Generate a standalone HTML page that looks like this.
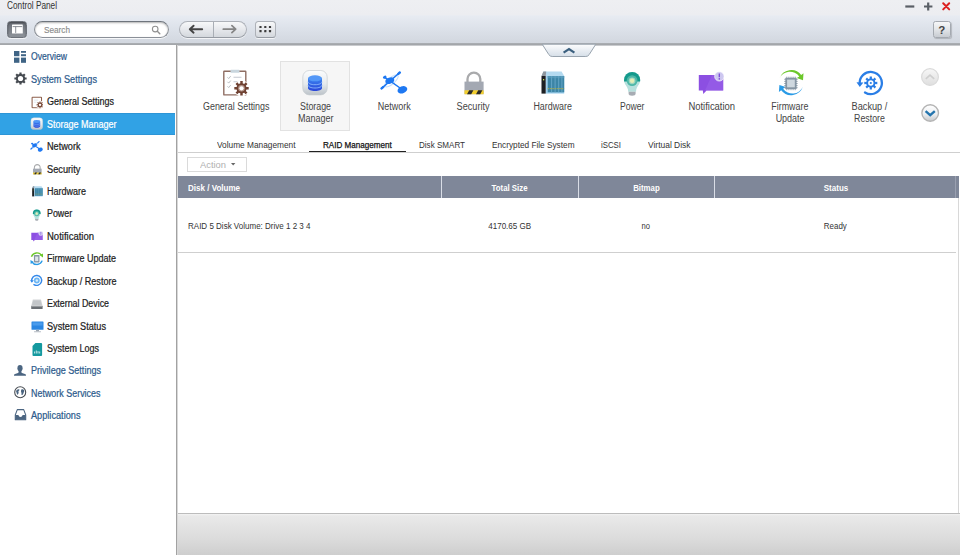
<!DOCTYPE html>
<html><head><meta charset="utf-8"><title>Control Panel</title>
<style>
*{box-sizing:border-box;margin:0;padding:0}
html,body{width:960px;height:555px;overflow:hidden;background:#fff;font-family:"Liberation Sans",sans-serif;color:#333}
.a{position:absolute}
.t{position:absolute;white-space:nowrap;line-height:14px;height:14px;display:block}
#top{left:0;top:0;width:960px;height:43px;background:linear-gradient(#eeeff2 0,#ecedf1 14.500px,#e7ebf2 16px,#dde2ea 28px,#d2d7df 43px)}
#topline{left:0;top:42.500px;width:960px;height:3px;background:linear-gradient(#b4b8bd 0,#9da0a4 35%,#a9acb0 65%,#e6e7e9 100%)}
#side{left:0;top:45px;width:176px;height:510px;background:#fff}
#vline{left:176px;top:45px;width:2px;height:510px;background:linear-gradient(90deg,#a2a2a2 0,#a2a2a2 50%,#d8d8d8 50%,#d8d8d8 100%)}
#sel{left:0;top:113px;width:175.3px;height:21.900px;background:#31a2e5;border-top:1px solid #2d95d6;border-bottom:1px solid #2d95d6}
#foot{left:178px;top:513px;width:782px;height:42px;background:linear-gradient(#f3f3f3 0,#e9e9e9 2px,#dcdcdc 24px,#cdcdcd 42px);border-top:1px solid #bcbcbc}
.btn{border:1px solid #adb1b8;border-bottom-color:#959aa2;background:linear-gradient(#f7f8f9,#e6e8ec 50%,#d4d8dd);box-shadow:0 1px 0 rgba(255,255,255,.7)}
#selbox{left:280px;top:61.3px;width:70.4px;height:70px;background:#f6f6f6;border:1px solid #e2e2e2}
#tabline{left:178px;top:151.5px;width:782px;height:1.3px;background:#cfcfcf}
#tabsel{left:309.2px;top:150.700px;width:96.900px;height:1.800px;background:#222}
#action{left:187px;top:157.3px;width:59.5px;height:14.5px;border:1px solid #dadada;background:#fff}
#th{left:178px;top:176.100px;width:781px;height:21.600px;background:#7f8799}
.vd{top:176.2px;width:1px;height:21.600px;background:#d9dde6}
#rowline{left:178px;top:252px;width:777.5px;height:1px;background:#cfcfcf}
#rline{left:958px;top:198px;width:1px;height:315px;background:#d8d8d8}

</style></head><body>
<div class="a" id="top"></div>
<div class="a" id="topline"></div>
<div class="a" id="side"></div>
<div class="a" id="sel"></div>
<div class="a" id="vline"></div>
<div class="a" id="foot"></div>
<div class="a" id="selbox"></div>
<div class="a" id="tabline"></div>
<div class="a" id="tabsel"></div>
<div class="a" id="action"></div>
<svg class="a" id="actarrow" style="left:230.500px;top:163px" width="5" height="3" viewBox="0 0 5 3"><path d="M0 0h4.400l-2.200 2.600z" fill="#666"/></svg>
<div class="a" id="th"></div>
<div class="a vd" style="left:441px"></div>
<div class="a vd" style="left:578px"></div>
<div class="a vd" style="left:714px"></div>
<div class="a vd" style="left:955px;background:#9aa0b0"></div>
<div class="a" id="rowline"></div>
<div class="a" id="rline"></div>
<!--TOOLBAR--><div class="a" style="left:6.5px;top:21px;width:20.5px;height:16.5px;border-radius:3.5px;border:1px solid #6d727a;background:linear-gradient(#686d75,#8f949b);box-shadow:inset 0 1px 2px rgba(0,0,0,.35),0 1px 0 rgba(255,255,255,.7)"></div>
<svg class="a" style="left:6.5px;top:21px" width="21" height="17" viewBox="0 0 21 17"><rect x="5" y="3.500" width="10.800" height="9" rx=".500" fill="#fff"/><path d="M5.600 5.600h9.600M8.700 5.600v6.300" stroke="#6f747c" stroke-width=".800" fill="none"/></svg>
<div class="a" style="left:33.500px;top:20.500px;width:135.200px;height:17.2px;border-radius:9px;border:1px solid #8b9098;border-top-color:#6f757d;background:#fff;box-shadow:inset 0 1px 2px rgba(0,0,0,.3),0 1px 0 rgba(255,255,255,.8)"></div>
<svg class="a" style="left:149px;top:23px" width="13" height="13" viewBox="0 0 13 13"><circle cx="6.200" cy="6.100" r="2.800" fill="none" stroke="#909090" stroke-width="1.100"/><path d="M8.300 8.300l2.500 2.500" stroke="#909090" stroke-width="1.400" stroke-linecap="round"/></svg>
<div class="a btn" style="left:179px;top:21px;width:67.5px;height:16.6px;border-radius:8.5px"></div>
<div class="a" style="left:213px;top:22px;width:1px;height:15px;background:#a9aeb5"></div>
<svg class="a" style="left:179px;top:21px" width="68" height="17" viewBox="0 0 68 17"><path d="M11 8.200h12.200M14.600 4.700l-3.800 3.500 3.800 3.500" fill="none" stroke="#444" stroke-width="1.900" stroke-linecap="round" stroke-linejoin="round"/><path d="M44.300 8.200h12.200M52.900 4.700l3.800 3.500-3.800 3.500" fill="none" stroke="#858585" stroke-width="1.700" stroke-linecap="round" stroke-linejoin="round"/></svg>
<div class="a btn" style="left:255px;top:21px;width:20.6px;height:16.6px;border-radius:3.5px"></div>
<svg class="a" style="left:255px;top:21px" width="21" height="17" viewBox="0 0 21 17"><g fill="#3c3c3c"><rect x="4.4" y="4.9" width="2.200" height="2.200" rx=".400"/><rect x="9.2" y="4.9" width="2.200" height="2.200" rx=".400"/><rect x="13.9" y="4.9" width="2.200" height="2.200" rx=".400"/><rect x="4.4" y="9.1" width="2.200" height="2.200" rx=".400"/><rect x="9.2" y="9.1" width="2.200" height="2.200" rx=".400"/><rect x="13.9" y="9.1" width="2.200" height="2.200" rx=".400"/></g></svg>
<div class="a btn" style="left:933.4px;top:21.3px;width:17.3px;height:16.3px;border-radius:2.5px;border-color:#a4a9b0;background:linear-gradient(#f6f7f8,#e2e5e8 50%,#c8ccd2);box-shadow:1px 1px 1px rgba(0,0,0,.18)"></div>
<span class="t" style="left:938.2px;top:22.6px;font-size:11.5px;font-weight:bold;color:#444">?</span>
<svg class="a" style="left:900px;top:0" width="56" height="13" viewBox="0 0 56 13"><path d="M5.300 6.500h9" stroke="#5a5f66" stroke-width="2.200"/><path d="M24 6.500h8.400M28.200 2.500v8" stroke="#5a5f66" stroke-width="2.200"/><path d="M43.200 3.200l6 6.200M49.200 3.200l-6 6.200" stroke="#dc2020" stroke-width="2" stroke-linecap="round"/></svg>
<svg class="a" style="left:540px;top:43px" width="58" height="16" viewBox="0 0 58 16"><defs><linearGradient id="hg" x1="0" y1="0" x2="0" y2="1"><stop offset="0" stop-color="#fdfdfe"/><stop offset="1" stop-color="#d6dfe8"/></linearGradient></defs><path d="M2.2 1.2h53.6l-6.6 10.4q-1.2 1.9-3.4 1.9h-33.6q-2.2 0-3.4-1.9z" fill="url(#hg)" stroke="#98a3ae" stroke-width="1"/><path d="M23.6 9.6l5.4-3.6 5.4 3.6" fill="none" stroke="#3b607f" stroke-width="2.2" stroke-linejoin="miter"/></svg>
<!--/TOOLBAR-->
<!--ICONS--><svg width="0" height="0" style="position:absolute"><defs><symbol id="i-gen" viewBox="0 0 28 28"><rect x="1.800" y="2.300" width="22" height="23.600" rx=".500" fill="#fff" stroke="#8f6e63" stroke-width="1.400"/>
<rect x="8.500" y=".800" width="9" height="3" rx=".600" fill="#c9d6de"/>
<path d="M5.500 8.300l1.200 1.300 2-2.500M5.500 12.800l1.200 1.300 2-2.500M5.500 17.300l1.200 1.300 2-2.500" fill="none" stroke="#b4b8bc" stroke-width=".900"/>
<path d="M11.500 8.300h8M11.500 12.800h6" stroke="#c4c8d0" stroke-width="1.100"/>
<circle cx="19.500" cy="19.300" r="8" fill="#fff"/>
<path d="M24.46 18.11L26.69 18.04L26.69 20.56L24.46 20.49L23.85 21.96L25.47 23.50L23.70 25.27L22.16 23.65L20.69 24.26L20.76 26.49L18.24 26.49L18.31 24.26L16.84 23.65L15.30 25.27L13.53 23.50L15.15 21.96L14.54 20.49L12.31 20.56L12.31 18.04L14.54 18.11L15.15 16.64L13.53 15.10L15.30 13.33L16.84 14.95L18.31 14.34L18.24 12.11L20.76 12.11L20.69 14.34L22.16 14.95L23.70 13.33L25.47 15.10L23.85 16.64Z" fill="#6f4132"/><circle cx="19.500" cy="19.300" r="3.300" fill="#b4968b"/><circle cx="19.500" cy="19.300" r="2.100" fill="#fff"/></symbol><symbol id="i-sto" viewBox="0 0 28 28"><defs><linearGradient id="sg" x1="0" y1="0" x2="0" y2="1"><stop offset="0" stop-color="#fbfcfd"/><stop offset=".55" stop-color="#e6eaed"/><stop offset="1" stop-color="#bcc3c9"/></linearGradient><linearGradient id="cg" x1="0" y1="0" x2="0" y2="1"><stop offset="0" stop-color="#3a82f0"/><stop offset="1" stop-color="#2a46d8"/></linearGradient></defs>
<rect x="1.800" y="1.500" width="24.400" height="24.400" rx="6.500" fill="url(#sg)" stroke="#c6cbd0" stroke-width=".700"/>
<path d="M7 9.300v9.600c0 1.800 3.100 3.100 7 3.100s7-1.300 7-3.100V9.300z" fill="url(#cg)"/>
<path d="M7 12.700c0 1.800 3.100 3 7 3s7-1.200 7-3M7 16c0 1.800 3.100 3 7 3s7-1.200 7-3" fill="none" stroke="#8db8fb" stroke-width=".900"/>
<ellipse cx="14" cy="9.300" rx="7" ry="3" fill="#5297f7"/></symbol><symbol id="i-net" viewBox="0 0 28 28"><ellipse cx="11.500" cy="11.800" rx="8.500" ry="3.200" fill="none" stroke="#bcd8fb" stroke-width="1.100" transform="rotate(-41 11.500 11.800)" opacity=".8"/>
<path d="M1.600 19.400L19.800 3.500" stroke="#1e78f2" stroke-width="1.500" stroke-linecap="round"/>
<path d="M1.600 19.400l1.500-1.300M18.300 4.800l1.500-1.300" stroke="#1e78f2" stroke-width="2.400" stroke-linecap="round"/>
<path d="M4.600 8.300l5 3.400 12.600 8.800" stroke="#1e78f2" stroke-width="1.500" stroke-linecap="round"/>
<ellipse cx="4.700" cy="8.200" rx="1.900" ry="1.400" fill="#1e78f2" transform="rotate(-25 4.700 8.200)"/>
<ellipse cx="9.800" cy="11.600" rx="4.600" ry="3" fill="#1e78f2" transform="rotate(-22 9.800 11.600)"/>
<ellipse cx="22.400" cy="20.800" rx="5" ry="3.500" fill="#1e78f2" transform="rotate(-22 22.400 20.800)"/></symbol><symbol id="i-sec" viewBox="0 0 28 28"><path d="M7.500 13.500V10a6.400 6.400 0 0 1 12.800 0v3.500" fill="none" stroke="#a9aaac" stroke-width="2.300"/>
<rect x="4.500" y="12.600" width="19.100" height="12.600" fill="#a3a8b2"/>
<rect x="4.500" y="21.300" width="19.100" height="3.900" fill="#f3cf2e"/>
<path d="M7 25.200l2.200-3.900h4.200l-2.200 3.900zM16 25.200l2.200-3.900h4.200l-2.200 3.900z" fill="#2b2b2b"/></symbol><symbol id="i-hw" viewBox="0 0 28 28"><path d="M4.400 2.500h18.200l2.600 4.500H2.500z" fill="#b4daf0"/><path d="M4.400 2.500h2.800l-.500 4.500H2.500z" fill="#8e959c"/>
<rect x="6.700" y="7" width="18.500" height="17.600" fill="#a2d2ee"/>
<rect x="2.500" y="7" width="4.200" height="17.600" fill="#1d2024"/>
<rect x="8.700" y="7" width="16.500" height="16.300" fill="#3c85a6"/>
<path d="M12.600 7v16.300M16.100 7v16.300M19.700 7v16.300M22.900 7v16.300" stroke="#69a9c9" stroke-width=".900"/>
<rect x="8.700" y="7" width="16.500" height="2.200" fill="#5fa0c0" opacity=".6"/>
<path d="M8.700 19.700h16.500" stroke="#b9b042" stroke-width=".900" stroke-dasharray="1.600 .700"/>
<rect x="4" y="10" width="1.200" height="1.400" fill="#c4e04a"/></symbol><symbol id="i-pow" viewBox="0 0 28 28"><path d="M6 11a8.100 8.100 0 1 1 16.200 0c0 3.500-2 5.200-3.200 7.500-.700 1.300-1 2.800-1 4.300h-7.800c0-1.500-.300-3-1-4.300-1.200-2.300-3.200-4-3.200-7.500z" fill="#b7e0dd"/>
<path d="M6 11a8.100 8.100 0 1 1 16.200 0l-.100 1.500h-16z" fill="#149a8c"/>
<circle cx="14.100" cy="11.600" r="5.400" fill="#4db8a8"/>
<circle cx="14.100" cy="11.800" r="3.400" fill="#9fd6c0"/>
<circle cx="14.100" cy="11.800" r="2.200" fill="#e4efb8"/>
<path d="M10.600 22.800h7v2c0 1.100-1.300 2-3.500 2s-3.500-.900-3.500-2z" fill="#a7acb3"/></symbol><symbol id="i-not" viewBox="0 0 28 28"><path d="M2.800 6h24.400v15.400H10.500l-3.200 3.600-.5-3.600H2.800z" fill="#8c4fe2"/>
<path d="M16 6h11.200v15.400H9z" fill="#9a63ea" opacity=".6"/>
<circle cx="23.300" cy="7.400" r="4.700" fill="#cdc7f0" stroke="#fff" stroke-width=".600"/>
<path d="M23.300 4.400v3.800" stroke="#7a49d6" stroke-width="1.300"/><circle cx="23.300" cy="9.900" r=".800" fill="#7a49d6"/></symbol><symbol id="i-fw" viewBox="0 0 28 28"><path d="M2.500 9.400A12.500 12.500 0 0 1 24.200 6L26.500 4.300 26 11.200 19.800 9.100 22.300 7.500A11.500 11.500 0 0 0 2.500 9.400Z" fill="#6cc72b"/>
<path d="M25.900 17.800A12.500 12.500 0 0 1 4.200 21.200L1.900 22.900 2.400 16 8.600 18.100 6.100 19.700A11.500 11.500 0 0 0 25.900 17.800Z" fill="#2a9be6"/>
<rect x="8.300" y="8.800" width="11.300" height="11.300" fill="#8796a4"/>
<path d="M9.800 7.700v13.500M11.900 7.700v13.500M14 7.700v13.500M16.100 7.700v13.500M18.200 7.700v13.500M7.300 10.300h13.300M7.300 12.400h13.300M7.300 14.500h13.300M7.300 16.600h13.300M7.300 18.700h13.300" stroke="#8796a4" stroke-width=".900"/>
<rect x="10.100" y="10.600" width="7.700" height="7.700" fill="#cfd8df"/></symbol><symbol id="i-bak" viewBox="0 0 28 28"><path d="M3.700 14.800A11.100 11.100 0 1 1 9 23.500" fill="none" stroke="#2a7ee6" stroke-width="2.300" stroke-linecap="round"/>
<path d="M.500 13.200l3.300 4.700 3.600-4.500z" fill="#2a7ee6"/>
<path d="M19.37 12.90L21.30 12.87L21.30 15.13L19.37 15.10L18.81 16.46L20.20 17.80L18.60 19.40L17.26 18.01L15.90 18.57L15.93 20.50L13.67 20.50L13.70 18.57L12.34 18.01L11.00 19.40L9.40 17.80L10.79 16.46L10.23 15.10L8.30 15.13L8.30 12.87L10.23 12.90L10.79 11.54L9.40 10.20L11.00 8.60L12.34 9.99L13.70 9.43L13.67 7.50L15.93 7.50L15.90 9.43L17.26 9.99L18.60 8.60L20.20 10.20L18.81 11.54Z" fill="#2a7ee6"/><circle cx="14.800" cy="14" r="2.700" fill="#fff"/><circle cx="14.800" cy="14" r="1.100" fill="#2a7ee6"/></symbol><symbol id="i-gens" viewBox="0 0 28 28"><rect x="2.400" y="2.600" width="20.600" height="23" rx="1.200" fill="#fff" stroke="#8d5f4c" stroke-width="2.300"/>
<path d="M6.500 9h9M6.500 13.500h6" stroke="#d5e0e8" stroke-width="1.600"/>
<circle cx="19.700" cy="19.300" r="8.600" fill="#fff"/>
<path d="M24.76 18.09L27.19 17.99L27.19 20.61L24.76 20.51L24.13 22.02L25.92 23.67L24.07 25.52L22.42 23.73L20.91 24.36L21.01 26.79L18.39 26.79L18.49 24.36L16.98 23.73L15.33 25.52L13.48 23.67L15.27 22.02L14.64 20.51L12.21 20.61L12.21 17.99L14.64 18.09L15.27 16.58L13.48 14.93L15.33 13.08L16.98 14.87L18.49 14.24L18.39 11.81L21.01 11.81L20.91 14.24L22.42 14.87L24.07 13.08L25.92 14.93L24.13 16.58Z" fill="#7b4b3a"/><circle cx="19.700" cy="19.300" r="2.600" fill="#fff"/></symbol><symbol id="i-nets" viewBox="0 0 28 28"><path d="M2 19.500L19.500 3.500" stroke="#1e78f2" stroke-width="2.600" stroke-linecap="round"/>
<path d="M4.600 7.800l5 3.800 12.600 8.800" stroke="#1e78f2" stroke-width="2.400" stroke-linecap="round"/>
<ellipse cx="11.500" cy="11.800" rx="8.500" ry="3.600" fill="#bcd8fb" transform="rotate(-41 11.500 11.800)" opacity=".55"/>
<ellipse cx="4.700" cy="7.800" rx="2.400" ry="1.900" fill="#1e78f2"/>
<ellipse cx="9.800" cy="11.600" rx="5.400" ry="4" fill="#1e78f2" transform="rotate(-22 9.800 11.600)"/>
<ellipse cx="22.200" cy="20.800" rx="5.400" ry="4.200" fill="#1e78f2" transform="rotate(-22 22.200 20.800)"/></symbol><symbol id="i-fws" viewBox="0 0 28 28"><path d="M3 10A12 12 0 0 1 24.500 7.500" fill="none" stroke="#6cc72b" stroke-width="3"/>
<path d="M20.500 7l7 4.500-.500-8.500z" fill="#6cc72b"/>
<path d="M25.400 18A12 12 0 0 1 3.900 20.500" fill="none" stroke="#2a9be6" stroke-width="3"/>
<path d="M7.900 21l-7-4.500.500 8.500z" fill="#2a9be6"/>
<rect x="8.200" y="6.500" width="11.600" height="15.500" rx="1" fill="#8796a4"/>
<rect x="10.700" y="9.500" width="6.600" height="9.500" fill="#dfe6ea"/></symbol><symbol id="i-baks" viewBox="0 0 28 28"><path d="M3.800 15.500A10.700 10.700 0 1 1 8.500 22.800" fill="none" stroke="#3388ea" stroke-width="3" stroke-linecap="round"/>
<path d="M0 13.500l4 5.500 4.300-5.300z" fill="#3388ea"/>
<circle cx="14.700" cy="14" r="6.300" fill="#6db6f4"/><circle cx="14.700" cy="14" r="2.600" fill="#d5ecfc"/></symbol></defs></svg>
<svg class="a" style="left:222.0px;top:69.300px" width="28" height="28"><use href="#i-gen"/></svg>
<svg class="a" style="left:301.0px;top:69.300px" width="28" height="28"><use href="#i-sto"/></svg>
<svg class="a" style="left:380.4px;top:69.300px" width="28" height="28"><use href="#i-net"/></svg>
<svg class="a" style="left:459.6px;top:69.300px" width="28" height="28"><use href="#i-sec"/></svg>
<svg class="a" style="left:539.3px;top:69.300px" width="28" height="28"><use href="#i-hw"/></svg>
<svg class="a" style="left:618.0px;top:69.300px" width="28" height="28"><use href="#i-pow"/></svg>
<svg class="a" style="left:696.3px;top:69.300px" width="28" height="28"><use href="#i-not"/></svg>
<svg class="a" style="left:776.7px;top:69.300px" width="28" height="28"><use href="#i-fw"/></svg>
<svg class="a" style="left:856.3px;top:69.300px" width="28" height="28"><use href="#i-bak"/></svg>
<svg class="a" style="left:919px;top:66px" width="22" height="22" viewBox="0 0 22 22"><defs><linearGradient id="ug" x1="0" y1="0" x2="0" y2="1"><stop offset="0" stop-color="#f7f7f7"/><stop offset="1" stop-color="#dedede"/></linearGradient></defs><circle cx="11" cy="11" r="8.400" fill="url(#ug)" stroke="#dadada" stroke-width="1.200"/><path d="M6.800 12.800l4.200-3.600 4.200 3.600" fill="none" stroke="#cfcfcf" stroke-width="1.700"/></svg>
<svg class="a" style="left:919px;top:102px" width="22" height="22" viewBox="0 0 22 22"><defs><linearGradient id="dg" x1="0" y1="0" x2="0" y2="1"><stop offset="0" stop-color="#ffffff"/><stop offset=".55" stop-color="#eef0f2"/><stop offset="1" stop-color="#c6c8cb"/></linearGradient></defs><circle cx="11.200" cy="11" r="8.300" fill="url(#dg)" stroke="#b4b4b4" stroke-width="1.400"/><path d="M6.600 9.200l4.600 4 4.600-4" fill="none" stroke="#2474ad" stroke-width="2.400"/></svg><!--/ICONS-->
<!--SIDEICONS--><svg width="0" height="0" style="position:absolute"><defs><symbol id="s-ov" viewBox="0 0 13 13" overflow="visible"><g fill="#3f6485"><rect x="0" y="0" width="5.400" height="5.200"/><rect x="7" y="0" width="5" height="1.800"/><rect x="7" y="3.200" width="5" height="2"/><rect x="0" y="6.600" width="5.400" height="5.200"/><rect x="7" y="6.600" width="5" height="5.200"/></g></symbol><symbol id="s-gear" viewBox="0 0 13 13" overflow="visible"><path d="M11.07 5.40L12.61 5.43L12.61 7.57L11.07 7.60L10.51 8.96L11.57 10.07L10.07 11.57L8.96 10.51L7.60 11.07L7.57 12.61L5.43 12.61L5.40 11.07L4.04 10.51L2.93 11.57L1.43 10.07L2.49 8.96L1.93 7.60L0.39 7.57L0.39 5.43L1.93 5.40L2.49 4.04L1.43 2.93L2.93 1.43L4.04 2.49L5.40 1.93L5.43 0.39L7.57 0.39L7.60 1.93L8.96 2.49L10.07 1.43L11.57 2.93L10.51 4.04Z" fill="#454a50"/><circle cx="6.500" cy="6.500" r="2.600" fill="#fff"/></symbol><symbol id="s-ext" viewBox="0 0 13 13" overflow="visible"><path d="M1.800.600h8.200l1.600 6.500H.200z" fill="#d2d4d6"/><path d="M2.300 1.400h7.200l1.200 4.700H1.100z" fill="#c3c6c9"/><rect x=".200" y="6.900" width="11.400" height="3" rx=".500" fill="#6b6f74"/><rect x=".200" y="6.900" width="11.400" height="1" fill="#9a9da1"/></symbol><symbol id="s-stat" viewBox="0 0 13 13" overflow="visible"><rect x=".500" y=".500" width="12" height="8.300" rx=".600" fill="#2b86e2"/><rect x="1.500" y="1.500" width="10" height="3" fill="#4a9bec"/><rect x="5" y="8.800" width="3" height="1.500" fill="#9aa3ad"/><rect x="3" y="10.200" width="7" height="1.100" rx=".400" fill="#b5bcc4"/></symbol><symbol id="s-log" viewBox="0 0 13 13" overflow="visible"><path d="M3.400 0h5.800q.900 0 .900.900v11.200q0 .900-.900.900H1.400q-.900 0-.900-.900V2.900z" fill="#15999f"/><path d="M2.600 10.500v-2M4.300 10.500v-3M6 10.500v-2.400M7.700 10.500v-2" stroke="#d6f1f0" stroke-width=".900"/></symbol><symbol id="s-priv" viewBox="0 0 13 13" overflow="visible"><g fill="#4b6581"><ellipse cx="6" cy="3.200" rx="2.600" ry="3.100"/><path d="M4.600 5.500h2.800v1.600c0 .600.400.900 1.300 1.200l2.300.800c.900.300 1 .900 1 1.700H0c0-.800.100-1.400 1-1.700l2.300-.800c.900-.300 1.300-.600 1.300-1.200z"/></g></symbol><symbol id="s-glob" viewBox="0 0 13 13" overflow="visible"><circle cx="6.200" cy="6.200" r="5.500" fill="#fff" stroke="#474c52" stroke-width="1.100"/><path d="M2.300 4.500c1-.800 2.200-1.400 3-1 .600.500-.300 1.200-.800 1.800-.500.700.400 1 .100 1.800-.300.800-.600 1.700-1.200 1.500-.700-.300-.500-1.400-.900-2.100-.300-.600-.600-1.300-.200-2zM7.600 3.300c.900-.300 2.100.200 2.600 1 .300.800-.200 1.500-.500 2.300-.300.800-.500 2-1.400 2.400-.800.300-1-.700-.800-1.500.200-.700-.500-1.100-.500-1.900 0-.900.100-1.900.600-2.300z" fill="#4b6581"/></symbol><symbol id="s-app" viewBox="0 0 13 13" overflow="visible"><path d="M2.300.600h6.400l2 5.300v4.900H.300V5.900z" fill="#fff" stroke="#4b6581" stroke-width="1.100" stroke-linejoin="round"/><path d="M.300 6h3.100c.300 1.300 1.100 1.900 2.100 1.900s1.800-.600 2.100-1.900h3.100v4.800H.300z" fill="#4b6581"/></symbol></defs></svg>
<svg class="a" style="left:13.80px;top:50.50px;overflow:visible" width="13" height="13"><use href="#s-ov"/></svg>
<svg class="a" style="left:13.50px;top:72.40px;overflow:visible" width="13" height="13"><use href="#s-gear"/></svg>
<svg class="a" style="left:30.60px;top:95.98px" width="12.8" height="12.8"><use href="#i-gens"/></svg>
<svg class="a" style="left:30.00px;top:117.32px" width="13.6" height="13.6"><use href="#i-sto"/></svg>
<svg class="a" style="left:30.20px;top:139.56px" width="13" height="13"><use href="#i-nets"/></svg>
<svg class="a" style="left:30.70px;top:163.10px" width="12.6" height="12.6"><use href="#i-sec"/></svg>
<svg class="a" style="left:30.70px;top:185.14px" width="13" height="13"><use href="#i-hw"/></svg>
<svg class="a" style="left:30.30px;top:207.78px" width="13.4" height="13.4"><use href="#i-pow"/></svg>
<svg class="a" style="left:30.20px;top:230.02px" width="13" height="13"><use href="#i-not"/></svg>
<svg class="a" style="left:30.00px;top:252.16px" width="13.4" height="13.4"><use href="#i-fws"/></svg>
<svg class="a" style="left:30.30px;top:274.30px" width="13" height="13"><use href="#i-baks"/></svg>
<svg class="a" style="left:31.30px;top:298.60px;overflow:visible" width="13" height="13"><use href="#s-ext"/></svg>
<svg class="a" style="left:30.60px;top:320.60px;overflow:visible" width="13" height="13"><use href="#s-stat"/></svg>
<svg class="a" style="left:31.90px;top:342.60px;overflow:visible" width="13" height="13"><use href="#s-log"/></svg>
<svg class="a" style="left:14.00px;top:364.80px;overflow:visible" width="13" height="13"><use href="#s-priv"/></svg>
<svg class="a" style="left:13.80px;top:385.50px;overflow:visible" width="13" height="13"><use href="#s-glob"/></svg>
<svg class="a" style="left:14.60px;top:409.00px;overflow:visible" width="13" height="13"><use href="#s-app"/></svg><!--/SIDEICONS-->

<span class="t" style="left:31.00px;top:50.30px;font-size:10px;color:#2d5b8c;-webkit-text-stroke:0.22px currentColor;transform:scaleX(0.8636);transform-origin:0 50%">Overview</span>
<span class="t" style="left:31.00px;top:72.74px;font-size:10px;color:#2d5b8c;-webkit-text-stroke:0.22px currentColor;transform:scaleX(0.9133);transform-origin:0 50%">System Settings</span>
<span class="t" style="left:47.00px;top:95.18px;font-size:10px;color:#222;-webkit-text-stroke:0.22px currentColor;transform:scaleX(0.8993);transform-origin:0 50%">General Settings</span>
<span class="t" style="left:47.00px;top:117.62px;font-size:10px;color:#fff;-webkit-text-stroke:0.22px currentColor;transform:scaleX(0.8980);transform-origin:0 50%">Storage Manager</span>
<span class="t" style="left:47.00px;top:140.06px;font-size:10px;color:#222;-webkit-text-stroke:0.22px currentColor;transform:scaleX(0.9158);transform-origin:0 50%">Network</span>
<span class="t" style="left:47.00px;top:162.50px;font-size:10px;color:#222;-webkit-text-stroke:0.22px currentColor;transform:scaleX(0.9218);transform-origin:0 50%">Security</span>
<span class="t" style="left:47.00px;top:184.94px;font-size:10px;color:#222;-webkit-text-stroke:0.22px currentColor;transform:scaleX(0.8995);transform-origin:0 50%">Hardware</span>
<span class="t" style="left:47.00px;top:207.38px;font-size:10px;color:#222;-webkit-text-stroke:0.22px currentColor;transform:scaleX(0.8886);transform-origin:0 50%">Power</span>
<span class="t" style="left:47.00px;top:229.82px;font-size:10px;color:#222;-webkit-text-stroke:0.22px currentColor;transform:scaleX(0.9501);transform-origin:0 50%">Notification</span>
<span class="t" style="left:47.00px;top:252.26px;font-size:10px;color:#222;-webkit-text-stroke:0.22px currentColor;transform:scaleX(0.8996);transform-origin:0 50%">Firmware Update</span>
<span class="t" style="left:47.00px;top:274.70px;font-size:10px;color:#222;-webkit-text-stroke:0.22px currentColor;transform:scaleX(0.9059);transform-origin:0 50%">Backup / Restore</span>
<span class="t" style="left:47.00px;top:297.14px;font-size:10px;color:#222;-webkit-text-stroke:0.22px currentColor;transform:scaleX(0.8853);transform-origin:0 50%">External Device</span>
<span class="t" style="left:47.00px;top:319.58px;font-size:10px;color:#222;-webkit-text-stroke:0.22px currentColor;transform:scaleX(0.9152);transform-origin:0 50%">System Status</span>
<span class="t" style="left:47.00px;top:342.02px;font-size:10px;color:#222;-webkit-text-stroke:0.22px currentColor;transform:scaleX(0.8995);transform-origin:0 50%">System Logs</span>
<span class="t" style="left:31.00px;top:364.46px;font-size:10px;color:#2d5b8c;-webkit-text-stroke:0.22px currentColor;transform:scaleX(0.9060);transform-origin:0 50%">Privilege Settings</span>
<span class="t" style="left:31.00px;top:386.90px;font-size:10px;color:#2d5b8c;-webkit-text-stroke:0.22px currentColor;transform:scaleX(0.8932);transform-origin:0 50%">Network Services</span>
<span class="t" style="left:31.00px;top:409.34px;font-size:10px;color:#2d5b8c;-webkit-text-stroke:0.22px currentColor;transform:scaleX(0.9180);transform-origin:0 50%">Applications</span>
<span class="t" style="left:6.80px;top:-1.20px;font-size:10px;color:#333;transform:scaleX(0.8252);transform-origin:0 50%">Control Panel</span>
<span class="t" style="left:43.80px;top:23.30px;font-size:9.5px;color:#8c8c8c;-webkit-text-stroke:0.15px currentColor;transform:scaleX(0.8635);transform-origin:0 50%">Search</span>
<span class="t" style="left:200.30px;top:158.20px;font-size:9.5px;color:#b0b0b0;transform:scaleX(0.9846);transform-origin:0 50%">Action</span>
<span class="t" style="left:198.75px;top:100.40px;font-size:10px;color:#444;transform:scaleX(0.8926);transform-origin:50% 50%">General Settings</span>
<span class="t" style="left:297.78px;top:100.40px;font-size:10px;color:#444;transform:scaleX(0.8849);transform-origin:50% 50%">Storage</span>
<span class="t" style="left:295.57px;top:111.70px;font-size:10px;color:#444;transform:scaleX(0.8994);transform-origin:50% 50%">Manager</span>
<span class="t" style="left:376.06px;top:100.40px;font-size:10px;color:#444;transform:scaleX(0.8995);transform-origin:50% 50%">Network</span>
<span class="t" style="left:455.44px;top:100.40px;font-size:10px;color:#444;transform:scaleX(0.9135);transform-origin:50% 50%">Security</span>
<span class="t" style="left:531.32px;top:100.40px;font-size:10px;color:#444;transform:scaleX(0.8879);transform-origin:50% 50%">Hardware</span>
<span class="t" style="left:617.82px;top:100.40px;font-size:10px;color:#444;transform:scaleX(0.8639);transform-origin:50% 50%">Power</span>
<span class="t" style="left:686.57px;top:100.40px;font-size:10px;color:#444;transform:scaleX(0.9440);transform-origin:50% 50%">Notification</span>
<span class="t" style="left:769.36px;top:100.40px;font-size:10px;color:#444;transform:scaleX(0.8879);transform-origin:50% 50%">Firmware</span>
<span class="t" style="left:774.08px;top:111.70px;font-size:10px;color:#444;transform:scaleX(0.8992);transform-origin:50% 50%">Update</span>
<span class="t" style="left:850.14px;top:100.40px;font-size:10px;color:#444;transform:scaleX(0.9198);transform-origin:50% 50%">Backup /</span>
<span class="t" style="left:852.09px;top:111.70px;font-size:10px;color:#444;transform:scaleX(0.8796);transform-origin:50% 50%">Restore</span>
<span class="t" style="left:216.70px;top:138.10px;font-size:9px;color:#333;transform:scaleX(0.9229);transform-origin:0 50%">Volume Management</span>
<span class="t" style="left:323.00px;top:138.10px;font-size:9px;color:#111;-webkit-text-stroke:0.25px currentColor;transform:scaleX(0.8975);transform-origin:0 50%">RAID Management</span>
<span class="t" style="left:418.50px;top:138.10px;font-size:9px;color:#333;transform:scaleX(0.8959);transform-origin:0 50%">Disk SMART</span>
<span class="t" style="left:491.50px;top:138.10px;font-size:9px;color:#333;transform:scaleX(0.9163);transform-origin:0 50%">Encrypted File System</span>
<span class="t" style="left:601.00px;top:138.10px;font-size:9px;color:#333;transform:scaleX(0.8690);transform-origin:0 50%">iSCSI</span>
<span class="t" style="left:648.00px;top:138.10px;font-size:9px;color:#333;transform:scaleX(0.9370);transform-origin:0 50%">Virtual Disk</span>
<span class="t" style="left:188.00px;top:181.00px;font-size:8.5px;color:#fff;font-weight:bold;transform:scaleX(0.9436);transform-origin:0 50%">Disk / Volume</span>
<span class="t" style="left:490.28px;top:181.00px;font-size:8.5px;color:#fff;font-weight:bold;transform:scaleX(0.9220);transform-origin:50% 50%">Total Size</span>
<span class="t" style="left:631.89px;top:181.00px;font-size:8.5px;color:#fff;font-weight:bold;transform:scaleX(0.9197);transform-origin:50% 50%">Bitmap</span>
<span class="t" style="left:823.01px;top:181.00px;font-size:8.5px;color:#fff;font-weight:bold;transform:scaleX(0.9429);transform-origin:50% 50%">Status</span>
<span class="t" style="left:188.00px;top:219.40px;font-size:8.5px;color:#333;transform:scaleX(0.9429);transform-origin:0 50%">RAID 5 Disk Volume: Drive 1 2 3 4</span>
<span class="t" style="left:486.61px;top:219.40px;font-size:8.5px;color:#333;transform:scaleX(0.9477);transform-origin:50% 50%">4170.65 GB</span>
<span class="t" style="left:641.07px;top:219.40px;font-size:8.5px;color:#333;transform:scaleX(0.8977);transform-origin:50% 50%">no</span>
<span class="t" style="left:823.21px;top:219.40px;font-size:8.5px;color:#333;transform:scaleX(0.9358);transform-origin:50% 50%">Ready</span>
</body></html>
